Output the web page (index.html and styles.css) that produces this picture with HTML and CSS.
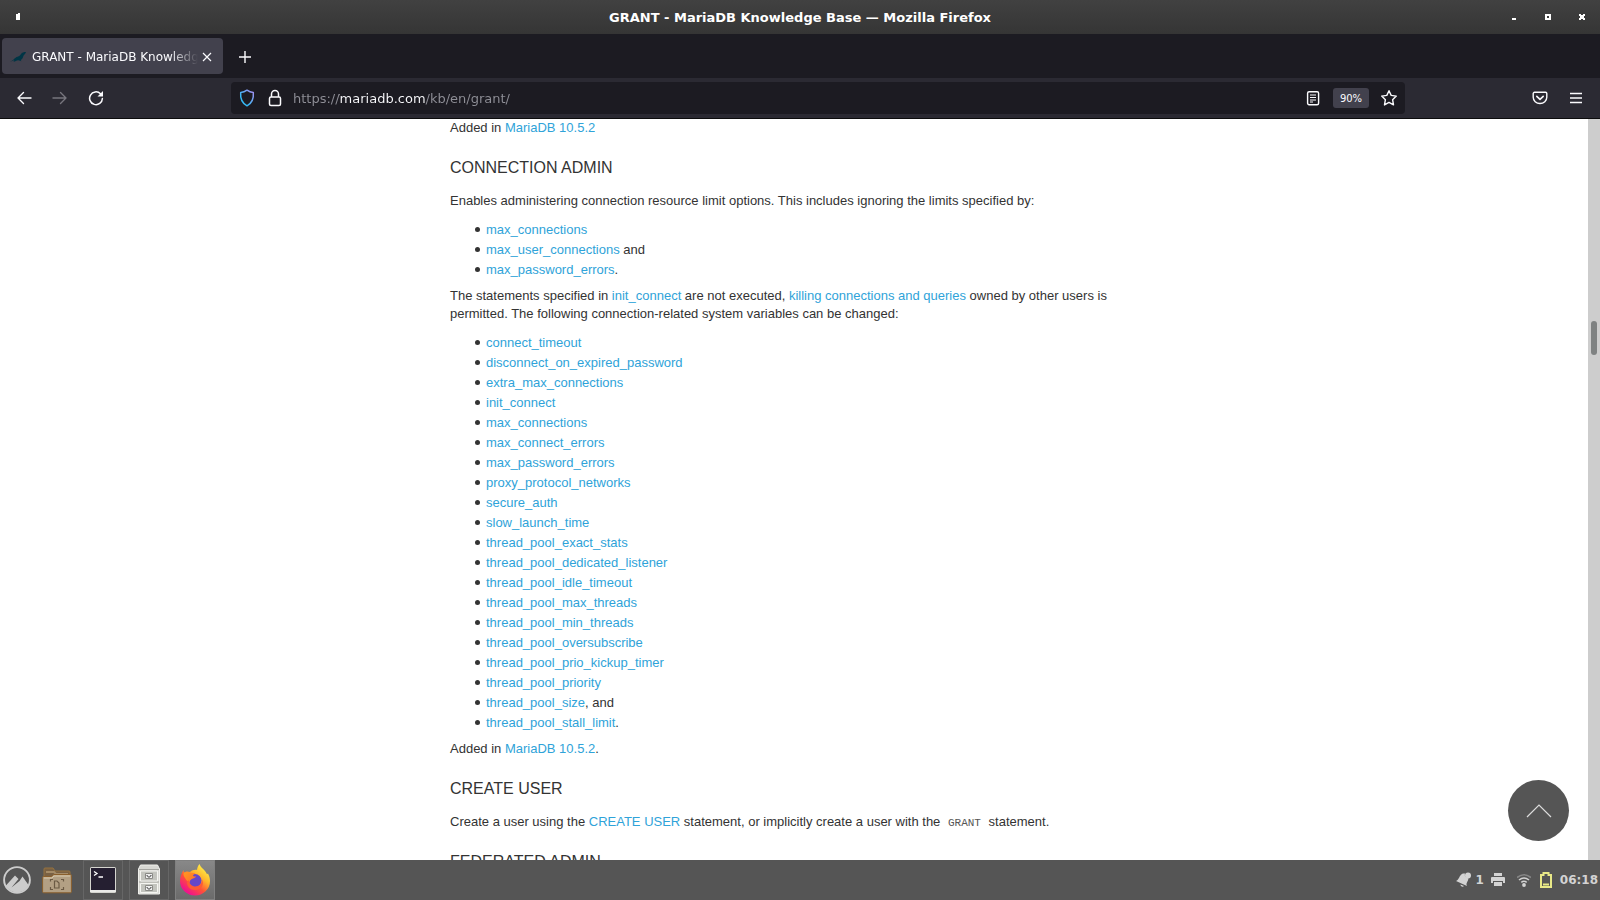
FILE: index.html
```html
<!DOCTYPE html>
<html lang="en">
<head>
<meta charset="utf-8">
<title>GRANT - MariaDB Knowledge Base</title>
<link rel="stylesheet" href="styles.css">
</head>
<body>
<header class="titlebar">
  <svg class="pin" width="6" height="8" viewBox="0 0 6 8"><path d="M1 1h2V0h2v7H1z" fill="#fff"/></svg>
  <h1 class="window-title">GRANT - MariaDB Knowledge Base — Mozilla Firefox</h1>
  <div class="window-controls">
    <button aria-label="Minimize"><svg width="6" height="6" viewBox="0 0 6 6"><path d="M1 4h4v2H1z" fill="#fff"/></svg></button>
    <button aria-label="Maximize"><svg width="6" height="6" viewBox="0 0 6 6"><path d="M0 0h6v6H0zM2 2v2h2V2z" fill="#fff" fill-rule="evenodd"/></svg></button>
    <button aria-label="Close window"><svg width="6" height="6" viewBox="0 0 6 6"><path d="M0 0h2v1h2V0h2v2H5v2h1v2H4V5H2v1H0V4h1V2H0z" fill="#fff"/></svg></button>
  </div>
</header>
<div class="tabs">
  <div class="tab">
    <svg width="16" height="16" viewBox="0 0 16 16"><path d="M16 3c-1 0-2.200.1-3 .6-2 .5-2 2.200-3.400 3.200-1.200.9-2.800 1-4 1.900C4 9.800 3.200 11.200 1.500 11.900L0 12.500c1.700.2 2.800-.8 4.300-1.200l-.8 1.500c1.900-.2 2.900-1.500 4.700-1.500 1.200 0 2 .9 3.300.9l-.9-1.100c2-1 2.300-2.700 2.900-4.300.4-1.200 2.100-1.800 2.500-3.800z" fill="#003545"/></svg>
    <span class="tab-title">GRANT - MariaDB Knowledge Base</span>
    <button aria-label="Close tab"><svg width="10" height="10" viewBox="0 0 10 10"><path d="M1 1l8 8M9 1L1 9" stroke="#fbfbfe" stroke-width="1.200"/></svg></button>
  </div>
  <button class="new-tab" aria-label="New tab"><svg width="12" height="12" viewBox="0 0 12 12"><path d="M6 0v12M0 6h12" stroke="#fbfbfe" stroke-width="1.400"/></svg></button>
</div>
<nav class="toolbar">
  <div class="nav-buttons">
    <button aria-label="Back"><svg width="16" height="16" viewBox="0 0 16 16"><path d="M15 8H2M7.500 2.500L2 8l5.500 5.500" fill="none" stroke="#fbfbfe" stroke-width="1.400" stroke-linecap="round" stroke-linejoin="round"/></svg></button>
    <button aria-label="Forward" disabled><svg width="16" height="16" viewBox="0 0 16 16"><path d="M1 8h13M8.500 2.500L14 8l-5.500 5.500" fill="none" stroke="#77767e" stroke-width="1.400" stroke-linecap="round" stroke-linejoin="round"/></svg></button>
    <button aria-label="Reload"><svg width="16" height="16" viewBox="0 0 16 16"><path d="M12.500 3.700A6.400 6.400 0 1 0 14.400 8.500" fill="none" stroke="#fbfbfe" stroke-width="1.500" stroke-linecap="round"/><path d="M15 1v5.500H9.500z" fill="#fbfbfe"/></svg></button>
  </div>
  <div class="urlbar">
    <button aria-label="Tracking protection"><svg width="16" height="18" viewBox="0 0 16 18"><defs><linearGradient id="shield" x1="0" y1="1" x2="1" y2="0"><stop offset=".3" stop-color="#35b9f4"/><stop offset="1" stop-color="#a98cf0"/></linearGradient></defs><path d="M8 1.200c2 1.500 4 2.200 6.300 2.300.5 5.500-1 10.500-6.300 13.300C2.700 14 1.200 9 1.700 3.500 4 3.400 6 2.700 8 1.200z" fill="none" stroke="url(#shield)" stroke-width="1.500" stroke-linejoin="round"/></svg></button>
    <button aria-label="Site information"><svg width="14" height="18" viewBox="0 0 14 18"><rect x="1.500" y="8" width="11" height="8.500" rx="1.500" fill="none" stroke="#fbfbfe" stroke-width="1.500"/><path d="M3.500 8V5a3.500 3.500 0 0 1 7 0v3" fill="none" stroke="#fbfbfe" stroke-width="1.500"/></svg></button>
    <input class="url" type="text" aria-label="Address" value="https://mariadb.com/kb/en/grant/">
    <button aria-label="Reader view"><svg width="14" height="16" viewBox="0 0 14 16"><rect x="1.600" y="1.700" width="11" height="13" rx="1.500" fill="none" stroke="#fbfbfe" stroke-width="1.400"/><path d="M4 5h6M4 7.500h6M4 10h6M4 12h3" stroke="#fbfbfe"/></svg></button>
    <button class="zoom-level">90%</button>
    <button aria-label="Bookmark"><svg width="18" height="18" viewBox="0 0 18 18"><path d="M9 1.700l2.200 4.700 5.100.7-3.700 3.600.9 5.200L9 13.400l-4.500 2.500.9-5.200L1.700 7.100l5.100-.7z" fill="none" stroke="#fbfbfe" stroke-width="1.400" stroke-linejoin="round"/></svg></button>
  </div>
  <div class="menu-buttons">
    <button aria-label="Save to Pocket"><svg width="16" height="16" viewBox="0 0 16 16"><path d="M2.500 2.300h11a1.300 1.300 0 0 1 1.300 1.300v3.600a6.800 6.300 0 0 1-13.600 0V3.600a1.300 1.300 0 0 1 1.300-1.300z" fill="none" stroke="#fbfbfe" stroke-width="1.400"/><path d="M4.800 6.300L8 9.300l3.200-3" fill="none" stroke="#fbfbfe" stroke-width="1.600" stroke-linecap="round" stroke-linejoin="round"/></svg></button>
    <button aria-label="Menu"><svg width="12" height="12" viewBox="0 0 12 12"><path d="M0 1.500h12M0 6h12M0 10.500h12" stroke="#fbfbfe" stroke-width="1.400"/></svg></button>
  </div>
</nav>
<main class="viewport">
  <article class="article">
    <p>Added in <a href="#">MariaDB 10.5.2</a></p>
    <h2>CONNECTION ADMIN</h2>
    <p>Enables administering connection resource limit options. This includes ignoring the limits specified by:</p>
    <ul>
      <li><a href="#">max_connections</a></li>
      <li><a href="#">max_user_connections</a> and</li>
      <li><a href="#">max_password_errors</a>.</li>
    </ul>
    <p>The statements specified in <a href="#">init_connect</a> are not executed, <a href="#">killing connections and queries</a> owned by other users is permitted. The following connection-related system variables can be changed:</p>
    <ul>
      <li><a href="#">connect_timeout</a></li>
      <li><a href="#">disconnect_on_expired_password</a></li>
      <li><a href="#">extra_max_connections</a></li>
      <li><a href="#">init_connect</a></li>
      <li><a href="#">max_connections</a></li>
      <li><a href="#">max_connect_errors</a></li>
      <li><a href="#">max_password_errors</a></li>
      <li><a href="#">proxy_protocol_networks</a></li>
      <li><a href="#">secure_auth</a></li>
      <li><a href="#">slow_launch_time</a></li>
      <li><a href="#">thread_pool_exact_stats</a></li>
      <li><a href="#">thread_pool_dedicated_listener</a></li>
      <li><a href="#">thread_pool_idle_timeout</a></li>
      <li><a href="#">thread_pool_max_threads</a></li>
      <li><a href="#">thread_pool_min_threads</a></li>
      <li><a href="#">thread_pool_oversubscribe</a></li>
      <li><a href="#">thread_pool_prio_kickup_timer</a></li>
      <li><a href="#">thread_pool_priority</a></li>
      <li><a href="#">thread_pool_size</a>, and</li>
      <li><a href="#">thread_pool_stall_limit</a>.</li>
    </ul>
    <p>Added in <a href="#">MariaDB 10.5.2</a>.</p>
    <h2>CREATE USER</h2>
    <p>Create a user using the <a href="#">CREATE USER</a> statement, or implicitly create a user with the <code>GRANT</code> statement.</p>
    <h2>FEDERATED ADMIN</h2>
  </article>
  <div class="scrollbar"><div class="thumb"></div></div>
  <button class="to-top" aria-label="Back to top"><svg width="26" height="14" viewBox="0 0 26 14"><path d="M1 13L13 1l12 12" fill="none" stroke="#ddd" stroke-width="1.200"/></svg></button>
</main>
<footer class="taskbar">
  <button class="start" aria-label="Menu"><svg width="28" height="28" viewBox="0 0 28 28"><circle cx="14" cy="14" r="12.900" fill="none" stroke="#ccc" stroke-width="1.900"/><path d="M2.500 20L12 9.500l3.500 3.500-7 8.500 8-6.500 3-4.500L25.500 19A12.500 12.500 0 0 1 5.500 23z" fill="#ccc"/></svg></button>
  <button class="files" aria-label="Files"><svg width="30" height="28" viewBox="0 0 30 28"><path d="M2 11V3q0-1 1-1h8l2 3h14q1 0 1 1v6H2z" fill="#7a6143" stroke="#96733f"/><path d="M4 6h8l2 2h12" fill="none" stroke="#a58c68" stroke-width="2"/><path d="M.600 11.500q0-1 1-1h8l2-2h16.800q1 0 1 1v16.300q0 1-1 1H1.600q-1 0-1-1z" fill="#b3a084" stroke="#8a5f2c"/><path d="M2 12h8l2-2h16" fill="none" stroke="#d9c9ab"/><path d="M8.500 15.500v-2H11M19 13.500h2.500v2M8.500 21v2.500H11M19 23.500h2.500V21M12.500 15h2.500l2 2v5h-4.500z" fill="none" stroke="#6b5a44" stroke-width="1.200"/></svg></button>
  <button class="task" aria-label="Terminal"><svg width="28" height="28" viewBox="0 0 28 28"><rect x="1" y="1" width="26" height="26" rx="1.500" fill="#d5d5cf"/><rect x="2" y="2" width="24" height="22" fill="#251f31"/><path d="M1 25h26" stroke="#fff"/><path d="M5 5.500l3 2-3 2M9.500 11h4.500" fill="none" stroke="#fff" stroke-width="1.300"/></svg></button>
  <button class="task" aria-label="File manager"><svg width="24" height="32" viewBox="0 0 24 32"><path d="M3.500 1h17L22.500 5v25h-21V5z" fill="#d8d8d3" stroke="#f0f0ec"/><path d="M2 5.500h20M2 18h20" stroke="#a5a5a0"/><path d="M3.500 7h17v10h-17zM3.500 19.500h17v9h-17z" fill="#c3c4be" stroke="#f5f5f1"/><path d="M8.500 9.500h7v5h-7zM8.500 21.500h7v5h-7z" fill="#eee" stroke="#8a8a86"/><path d="M9.500 11.500h1l.5 1.500h2l.5-1.500h1M9.500 23.500h1l.5 1.500h2l.5-1.500h1" fill="none" stroke="#555"/></svg></button>
  <button class="task active" aria-label="Firefox"><svg width="32" height="32" viewBox="0 0 32 32"><defs><linearGradient id="fox" x1=".85" y1=".1" x2=".25" y2=".9"><stop offset="0" stop-color="#fff04a"/><stop offset=".35" stop-color="#ffb52b"/><stop offset=".65" stop-color="#ff5236"/><stop offset="1" stop-color="#f0138c"/></linearGradient><linearGradient id="head" x1="0" y1="0" x2="1" y2="1"><stop offset="0" stop-color="#ff9a1f"/><stop offset="1" stop-color="#ff6a2c"/></linearGradient></defs><path d="M4.500 6c0 1 .3 2 .8 2.800C7 7 9 7.500 11 8c2-2 5-2.500 7-2 .3-2.500 1-4.200 2.500-6 .8 3 3.500 4.700 5.500 7 1 1.200 1.500 2.200 2 3.300l1-.8c1.300 2.500 2 5 2 7.500a15 14.500 0 0 1-30 0c0-4.500 1.500-7.500 3.500-11z" fill="url(#fox)"/><circle cx="16" cy="16.500" r="6.500" fill="#6547c8"/><path d="M5 8.500c2.500-1 5-.7 7 .6 1.500-.2 3-.1 4.500.4-1.500.6-2.500 1.300-2.500 2.500.8.500 2 .4 3.200.5-.7 1.200-2.200 1.500-3.200 2-2.500 1-3.500 2.200-3.300 4.500-2.200-1.500-3.500-3-4.700-5C4.500 12 4 10 5 8.500z" fill="url(#head)"/><path d="M10 16c0 4 3 6.500 6.500 6.500 4 0 6.800-3 6.500-7 2.500 5-.5 10.500-7 10.500-5 0-8-3.500-8-8z" fill="#ff5a34"/></svg></button>
  <div class="tray">
    <svg width="15" height="16" viewBox="0 0 15 16"><path d="M0 9c3-1 3-5 6-7 1-.7 2-.6 3-.5a3.500 3.500 0 0 0 3.500 4.700C12 10 9.500 11 11 14z" fill="#d3d3d3"/><circle cx="12" cy="3.500" r="3" fill="#d3d3d3"/><path d="M4.500 12.500a2 2 0 0 0 3.500 1.500z" fill="#d3d3d3"/></svg>
    <span class="count">1</span>
    <svg class="printer" width="14" height="14" viewBox="0 0 14 14"><path d="M3 0h8v3H3zM1 4h12q1 0 1 1v5h-2V8H2v2H0V5q0-1 1-1zM3 9h8v4H3z" fill="#d3d3d3"/></svg>
    <svg class="wifi" width="14" height="14" viewBox="0 0 14 14"><path d="M0 4.500Q7-1 14 4.500" fill="none" stroke="#858585" stroke-width="1.700"/><path d="M2 7q5-4 10 0M4.300 9.300q2.700-2 5.400 0" fill="none" stroke="#d3d3d3" stroke-width="1.600"/><circle cx="7" cy="12" r="1.900" fill="#d3d3d3"/></svg>
    <svg class="battery" width="12" height="16" viewBox="0 0 12 16"><path d="M1 3h2.500V1h5v2H11v12H1z" fill="none" stroke="#e8e887" stroke-width="2"/><path d="M3 12.500h6" stroke="#e8e887" stroke-width="2"/></svg>
    <time class="clock">06:18</time>
  </div>
</footer>
</body>
</html>
```
FILE: styles.css
```css
* { box-sizing: border-box; }

body {
  margin: 0;
  height: 100vh;
  display: flex;
  flex-direction: column;
  overflow: hidden;
  background: #fff;
  font-family: "DejaVu Sans", sans-serif;
}

button {
  display: flex;
  align-items: center;
  justify-content: center;
  padding: 0;
  border: 0;
  background: none;
  font: inherit;
  color: inherit;
}

svg { display: block; flex: none; }

.titlebar {
  flex: none;
  height: 34px;
  display: grid;
  grid-template-columns: 1fr auto 1fr;
  align-items: center;
  padding: 0 15px;
  background: linear-gradient(#414141, #353535);
  color: #fff;
}

.window-title {
  margin: 0;
  font-size: 13px;
  font-weight: bold;
}

.window-controls {
  display: flex;
  justify-content: flex-end;
  gap: 28px;
}

.tabs {
  flex: none;
  height: 44px;
  display: flex;
  align-items: center;
  padding: 0 2px;
  background: #1c1b22;
  color: #fbfbfe;
}

.tab {
  width: 221px;
  height: 36px;
  display: flex;
  align-items: center;
  padding: 2px 11px 0 8px;
  border-radius: 4px;
  background: #42414d;
  font-size: 12px;
}

.tab-title {
  flex: 1;
  min-width: 0;
  margin-left: 6px;
  overflow: hidden;
  white-space: nowrap;
  mask-image: linear-gradient(to left, transparent, #000 28px);
}

.tab button { margin-left: 4px; }

.new-tab { width: 43px; height: 36px; padding-top: 2px; }

.toolbar {
  flex: none;
  height: 41px;
  display: flex;
  align-items: center;
  border-bottom: 1px solid #0c0c0d;
  background: #2b2a33;
  color: #fbfbfe;
}

.nav-buttons {
  flex: 0 0 231px;
  display: flex;
  gap: 20px;
  padding-left: 16px;
}

.urlbar {
  flex: 1;
  height: 32px;
  display: flex;
  align-items: center;
  padding: 0 7px 0 8px;
  border-radius: 4px;
  background: #1c1b22;
}

.urlbar button + button { margin-left: 13px; }

.url {
  flex: 1;
  min-width: 0;
  margin-left: 11px;
  padding: 0;
  border: 0;
  outline: 0;
  font: 13px "DejaVu Sans", sans-serif;
  color: transparent;
  background: linear-gradient(to right, #8f8f97 46px, #fbfbfe 46px 132px, #8f8f97 132px);
  background-clip: text;
}

.urlbar .zoom-level {
  width: 36px;
  height: 20px;
  border-radius: 3px;
  background: #42414d;
  font-size: 10px;
}

.urlbar .zoom-level + button { margin-left: 11px; }

.menu-buttons {
  flex: 0 0 195px;
  display: flex;
  align-items: center;
  justify-content: flex-end;
  gap: 22px;
  padding-right: 18px;
}

.viewport {
  position: relative;
  flex: 1;
  min-height: 0;
  display: flex;
  overflow: hidden;
}

.article {
  width: 688px;
  margin: 0 auto;
  font: 13px/18px "Liberation Sans", Arial, sans-serif;
  color: #333;
}

.article a { color: #2fa3d9; text-decoration: none; }

.article p { margin: 0 0 9px; }

.article h2 {
  margin: 22px 0 15px;
  font-size: 16px;
  line-height: 18px;
  font-weight: normal;
}

.article ul {
  margin: 0 0 7px;
  padding-left: 36px;
  list-style: none;
}

.article p + ul { padding-top: 1px; }

.article li { line-height: 20px; }

.article li::before {
  content: "";
  display: inline-block;
  width: 5px;
  height: 5px;
  margin: 0 6px 0 -11px;
  border-radius: 50%;
  background: #333;
  vertical-align: 2px;
}

.article code {
  padding: 0 4px;
  font: 11px "Liberation Mono", monospace;
  color: #555;
}

.scrollbar {
  flex: 0 0 12px;
  padding: 202px 3px 0;
  background: #cdcdcd;
}

.thumb {
  height: 34px;
  border-radius: 3px;
  background: #7f8282;
}

.to-top {
  position: absolute;
  right: 31px;
  bottom: 19px;
  width: 61px;
  height: 61px;
  border-radius: 50%;
  background: #555;
}

.taskbar {
  flex: none;
  height: 40px;
  display: flex;
  align-items: center;
  padding: 0 2px 0 3px;
  background: #555;
  color: #d3d3d3;
  font-size: 12px;
  font-weight: bold;
}

.files { margin: 0 11px; }

.task {
  width: 40px;
  height: 40px;
  margin-right: 6px;
  border: 1px solid #666;
}

.task.active {
  background: linear-gradient(#888, #6b6b6b);
  border-color: #808080;
}

.tray {
  margin-left: auto;
  display: flex;
  align-items: center;
}

.count { margin: 0 7px 0 4px; }
.wifi { margin: 0 9px 0 12px; }
.clock { margin-left: 8px; }
```
